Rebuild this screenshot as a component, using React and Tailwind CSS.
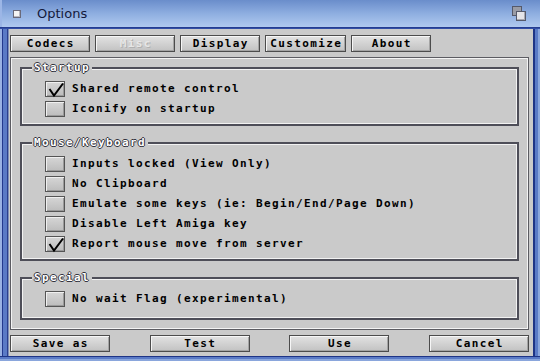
import React from "react";

const mono =
  "font-['DejaVu_Sans_Mono',monospace] font-bold text-[11px] tracking-[1.38px] leading-[12px]";

function Btn({ children, w, disabled }) {
  return (
    <div
      className={`${w} h-[17px] flex items-center justify-center border border-[#4c4c4c] bg-[linear-gradient(to_bottom,#e2e2e2,#c2c2c2)] shadow-[inset_1px_1px_0_#f6f6f6,inset_-1px_-1px_0_#a4a4a4] ${mono} ${
        disabled
          ? "text-[#e6e6e6] [text-shadow:1px_1px_0_#b0b0b0]"
          : "text-black"
      }`}
    >
      <span className="pl-[1.38px]">{children}</span>
    </div>
  );
}

function Check({ checked, label }) {
  return (
    <div className="flex items-center h-[16px]">
      <div className="relative w-[20px] h-[16px] border border-[#555] bg-[linear-gradient(to_bottom,#d6d6d6,#bcbcbc)] shadow-[inset_1px_1px_0_#f0f0f0,inset_-1px_-1px_0_#9a9a9a]">
        {checked && (
          <svg
            className="absolute left-0 top-[-1px]"
            width="20"
            height="17"
            viewBox="0 0 20 17"
          >
            <polyline
              points="3.5,8 8,14.5 17,2.5"
              fill="none"
              stroke="#000"
              strokeWidth="2"
              strokeLinejoin="miter"
            />
          </svg>
        )}
      </div>
      <span className={`ml-[7px] text-black ${mono}`}>{label}</span>
    </div>
  );
}

function Group({ title, children, pb }) {
  return (
    <div
      className={`relative border-2 border-[#4e4e58] shadow-[inset_1px_1px_0_#f2f2f2,inset_-1px_-1px_0_#f2f2f2] pl-[23px] pt-[12px] ${pb} flex flex-col gap-[4px]`}
    >
      <span
        className="absolute left-[10px] top-[-7px] px-[2px] bg-[#cacaca] text-white font-['DejaVu_Sans_Mono',monospace] font-bold text-[11px] tracking-[1.38px] leading-[12px] [text-shadow:1px_0_0_#34343e,-1px_0_0_#34343e,0_1px_0_#34343e,0_-1px_0_#34343e]"
      >
        {title}
      </span>
      {children}
    </div>
  );
}

export default function App() {
  return (
    <div className="w-[540px] h-[361px] flex flex-col overflow-hidden bg-[#2a45a0]">
      {/* Title bar */}
      <div className="relative h-[27px] flex items-center bg-[linear-gradient(to_bottom,#6a8dcb,#8eaee0_50%,#b0c9ef)] shadow-[inset_2px_0_0_#9cb6e6]">
        <div className="ml-[13px] w-[8px] h-[8px] border border-[#6a6a7a] bg-[#f4f4f4] shadow-[inset_-1px_-1px_0_#b8b8c0]" />
        <span className="ml-[16px] font-['DejaVu_Sans',sans-serif] text-[13px] text-[#141a3c]">
          Options
        </span>
        <div className="ml-auto mr-[13px] relative w-[15px] h-[16px]">
          <div className="absolute left-0 top-0 w-[10px] h-[10px] border border-[#55596a] bg-[#9a9ca6]" />
          <div className="absolute left-[4px] top-[5px] w-[10px] h-[10px] border border-[#55596a] bg-[#e4e4e8] shadow-[inset_-1px_-1px_0_#a8a8b0]" />
        </div>
      </div>
      <div className="h-[2px] bg-[linear-gradient(to_bottom,#1e3486,#3a58b0)]" />
      {/* Body */}
      <div className="flex flex-1">
        <div className="w-[9px] bg-[linear-gradient(to_right,#9ab2e4_0px,#9ab2e4_2px,#23398e_2px,#23398e_3px,#5a7ac6_3px,#5a7ac6_7px,#2c3f8e_7px,#2c3f8e_8px,#7d8fb8_8px)]" />
        <div className="flex-1 bg-[#cacaca] flex flex-col pl-[1px] pr-[4px] pt-[6px]">
          {/* tabs */}
          <div className="flex gap-[5px]">
            <Btn w="w-[80px]">Codecs</Btn>
            <Btn w="w-[80px]" disabled>
              Misc
            </Btn>
            <Btn w="w-[80px]">Display</Btn>
            <Btn w="w-[81px]">Customize</Btn>
            <Btn w="w-[80px]">About</Btn>
          </div>
          {/* panel */}
          <div className="mt-[5px] h-[273px] border border-[#5c5c62] shadow-[inset_1px_1px_0_#f4f4f4,inset_-1px_-1px_0_#f4f4f4] px-[9px] pt-[9px] flex flex-col gap-[16px]">
            <Group title="Startup" pb="pb-[7px]">
              <Check checked label="Shared remote control" />
              <Check label="Iconify on startup" />
            </Group>
            <Group title="Mouse/Keyboard" pb="pb-[7px]">
              <Check label="Inputs locked (View Only)" />
              <Check label="No Clipboard" />
              <Check label="Emulate some keys (ie: Begin/End/Page Down)" />
              <Check label="Disable Left Amiga key" />
              <Check checked label="Report mouse move from server" />
            </Group>
            <Group title="Special" pb="pb-[11px]">
              <Check label="No wait Flag (experimental)" />
            </Group>
          </div>
          {/* bottom buttons */}
          <div className="mt-[5px] flex justify-between">
            <Btn w="w-[100px]">Save as</Btn>
            <Btn w="w-[100px]">Test</Btn>
            <Btn w="w-[100px]">Use</Btn>
            <Btn w="w-[100px]">Cancel</Btn>
          </div>
        </div>
        <div className="w-[7px] bg-[linear-gradient(to_right,#1e3486_0px,#1e3486_2px,#5a7ac6_2px,#5a7ac6_5px,#8aa6dc_5px)]" />
      </div>
      <div className="h-[5px] bg-[linear-gradient(to_bottom,#1e3486_0px,#1e3486_1px,#5a7ac6_1px,#5a7ac6_3px,#8aa6dc_3px)]" />
    </div>
  );
}
